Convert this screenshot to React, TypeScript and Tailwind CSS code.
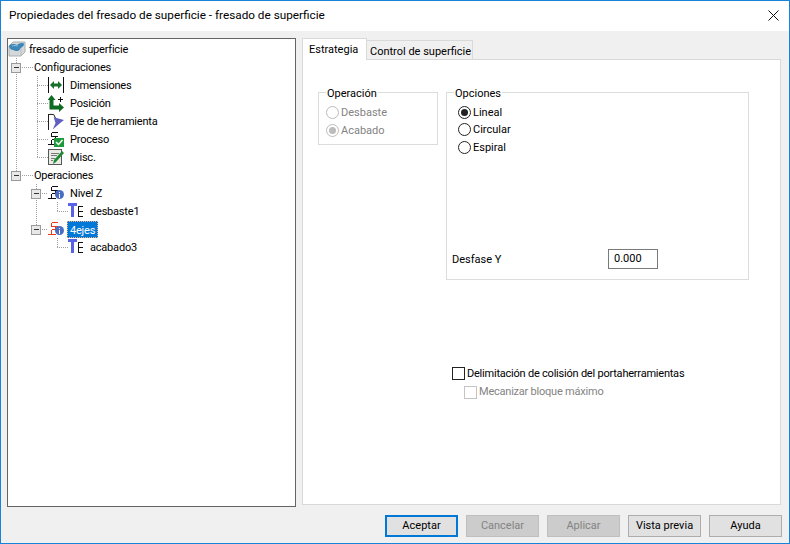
import type { ReactNode } from "react";

/* =========================
   ICONS
========================= */
function RootIcon() {
  return (
    <svg width="18" height="16" viewBox="0 0 18 16">
      <path d="M1 5 L5 1 H17 V11 L13 15 H1 Z" fill="#d5d8da" stroke="#a9aeb2" />
      <path d="M1 5 H13 V15 M13 5 L17 1" fill="none" stroke="#b9bdc0" />
      <path d="M1 5 C3 2 7 3 9 4 C11 2 15 1 16 3 C16 6 13 6 12 8 C11 11 7 10 5 9 C3 9 1 7 1 5 Z" fill="#3c86b8" />
      <path d="M4 5 C6 4 8 5 10 5" fill="none" stroke="#8fc1de" />
    </svg>
  );
}

function DimensionIcon() {
  return (
    <svg width="16" height="16" viewBox="0 0 16 16">
      <path d="M0.5 0 V16 M15.5 0 V16" stroke="#111" shapeRendering="crispEdges" />
      <path d="M2 8 L6 4 V6.5 H10 V4 L14 8 L10 12 V9.5 H6 V12 Z" fill="#16702b" />
    </svg>
  );
}

function PositionIcon() {
  return (
    <svg width="16" height="17" viewBox="0 0 16 17">
      <path d="M3.5 0 L7.5 5 H5.5 V10.5 H11 V8 L16 12.5 L11 17 V14.5 H1.5 V5 H-0.5 Z" fill="#0f6b22" />
      <path d="M9.5 4.5 H15 M12 2 V7" stroke="#111" shapeRendering="crispEdges" />
    </svg>
  );
}

function AxisIcon() {
  return (
    <svg width="17" height="17" viewBox="0 0 17 17">
      <path d="M0.5 0 V17" stroke="#111" shapeRendering="crispEdges" />
      <path d="M1 1 H6 L10 9" fill="none" stroke="#111" />
      <path d="M6 4 L17 7 L12 11 L5 17 L8 10 Z" fill="#5f5fc4" />
    </svg>
  );
}

function BracketGlyph({ color }: { color: string }) {
  return (
    <path
      d="M3.5 1.5 H10 M3.5 1.5 V5.5 H10 M7.5 5.5 V8.5 M3.5 8.5 H9 M3.5 8.5 V12.5 M0 13.5 H8"
      fill="none"
      stroke={color}
      shapeRendering="crispEdges"
    />
  );
}

function ProcessIcon() {
  return (
    <svg width="16" height="16" viewBox="0 0 16 16">
      <BracketGlyph color="#111" />
      <rect x="6" y="7" width="10" height="9" fill="#1f9a3a" />
      <path d="M8 11 L10.5 13.5 L14.5 9" fill="none" stroke="#fff" strokeWidth="1.5" />
    </svg>
  );
}

function MiscIcon() {
  return (
    <svg width="16" height="16" viewBox="0 0 16 16">
      <rect x="0.5" y="0.5" width="13" height="15" fill="#eceae4" stroke="#55585a" />
      <path d="M3 4 H11 M3 6.5 H9 M3 9 H7 M3 11.5 H5" stroke="#77797a" shapeRendering="crispEdges" />
      <path d="M5 15 L6 11 L14 2 L16 4 L8 13 Z" fill="#1e8a34" />
    </svg>
  );
}

function InfoOperationIcon({ color }: { color: string }) {
  return (
    <svg width="16" height="16" viewBox="0 0 16 16">
      <BracketGlyph color={color} />
      <circle cx="11.5" cy="9.5" r="4.5" fill="#4a6ec4" />
      <path d="M11.5 7 V8 M11.5 9 V12.5" stroke="#fff" shapeRendering="crispEdges" />
    </svg>
  );
}

function ToolIcon() {
  return (
    <svg width="16" height="16" viewBox="0 0 16 16" shapeRendering="crispEdges">
      <path d="M0 0 H9 V3 H6 V14 H3 V3 H0 Z" fill="#5a62e6" />
      <path d="M10 3.5 H15 M10 3.5 V8.5 H15 M10 8.5 V13.5 H15" fill="none" stroke="#111" />
    </svg>
  );
}

/* =========================
   TREE
========================= */
interface Row {
  label: string;
  gutter: number;
  icon?: ReactNode;
  box?: number;
  dash?: [number, number];
  lines?: [number, number, number][];
  selected?: boolean;
}

const rows: Row[] = [
  { label: "fresado de superficie", gutter: 0, icon: <RootIcon /> },
  { label: "Configuraciones", gutter: 25, box: 8, dash: [14, 25], lines: [[8, 0, 18]] },
  { label: "Dimensiones", gutter: 40, icon: <DimensionIcon />, dash: [29, 40], lines: [[8, 0, 18], [29, 0, 18]] },
  { label: "Posición", gutter: 40, icon: <PositionIcon />, dash: [29, 40], lines: [[8, 0, 18], [29, 0, 18]] },
  { label: "Eje de herramienta", gutter: 40, icon: <AxisIcon />, dash: [29, 40], lines: [[8, 0, 18], [29, 0, 18]] },
  { label: "Proceso", gutter: 40, icon: <ProcessIcon />, dash: [29, 40], lines: [[8, 0, 18], [29, 0, 18]] },
  { label: "Misc.", gutter: 40, icon: <MiscIcon />, dash: [29, 40], lines: [[8, 0, 18], [29, 0, 9]] },
  { label: "Operaciones", gutter: 25, box: 8, dash: [14, 25], lines: [[8, 0, 5], [29, 9, 18]] },
  { label: "Nivel Z", gutter: 40, icon: <InfoOperationIcon color="#111" />, box: 28, dash: [34, 40], lines: [[28, 0, 18]] },
  { label: "desbaste1", gutter: 60, icon: <ToolIcon />, dash: [49, 60], lines: [[28, 0, 18], [49, 0, 9]] },
  { label: "4ejes", gutter: 40, icon: <InfoOperationIcon color="#e8391a" />, box: 28, dash: [34, 40], lines: [[28, 0, 5]], selected: true },
  { label: "acabado3", gutter: 60, icon: <ToolIcon />, dash: [49, 60], lines: [[49, 0, 9]] },
];

function Gutter({ row }: { row: Row }) {
  if (!row.gutter) return null;
  return (
    <svg width={row.gutter} height="18" viewBox={`0 0 ${row.gutter} 18`} className="shrink-0" shapeRendering="crispEdges">
      {row.lines?.map(([x, y1, y2], i) => (
        <path key={i} d={`M${x + 0.5} ${y1} V${y2}`} stroke="#a0a0a0" strokeDasharray="1 1" />
      ))}
      {row.dash && <path d={`M${row.dash[0]} 9.5 H${row.dash[1]}`} stroke="#a0a0a0" strokeDasharray="1 1" />}
      {row.box !== undefined && (
        <g>
          <rect x={row.box - 4.5} y="5.5" width="9" height="9" fill="#e8e8e8" stroke="#9a9a9a" />
          <path d={`M${row.box - 2} 9.5 H${row.box + 3}`} stroke="#333" />
        </g>
      )}
    </svg>
  );
}

function Tree() {
  return (
    <div className="w-[289px] h-[469px] shrink-0 bg-white border border-[#646464] pt-px tracking-[-0.2px]">
      {rows.map((row) => (
        <div key={row.label} className="flex items-center h-[18px]">
          <Gutter row={row} />
          {row.icon && <span className="flex shrink-0 w-4 mr-[5px] first:w-[18px] first:mr-[2px]">{row.icon}</span>}
          <span
            className={
              row.selected
                ? "bg-[#0078d7] text-white outline-1 outline-dotted outline-[#f4b183] -outline-offset-1 px-[3px] h-[17px] leading-[19px] -ml-[2px]"
                : "px-[1px] h-[18px] leading-[20px] text-black"
            }
          >
            {row.label}
          </span>
        </div>
      ))}
    </div>
  );
}

/* =========================
   FORM CONTROLS
========================= */
function Radio({ label, checked, disabled }: { label: string; checked?: boolean; disabled?: boolean }) {
  return (
    <div className={`flex items-center h-[18px] whitespace-nowrap ${disabled ? "text-[#838383]" : "text-black"}`}>
      <span
        className={`flex items-center justify-center w-[13px] h-[13px] mr-[2px] rounded-full border bg-white ${
          disabled ? "border-[#bcbcbc]" : "border-[#222]"
        }`}
      >
        {checked && <span className={`w-[7px] h-[7px] rounded-full ${disabled ? "bg-[#bcbcbc]" : "bg-[#222]"}`} />}
      </span>
      <span className="pt-[2px]">{label}</span>
    </div>
  );
}

function Check({ label, disabled }: { label: string; disabled?: boolean }) {
  return (
    <div className={`flex items-center h-[19px] whitespace-nowrap tracking-[-0.22px] ${disabled ? "text-[#838383] ml-3" : "text-black"}`}>
      <span className={`w-[13px] h-[13px] mr-[2px] border bg-white ${disabled ? "border-[#c4c4c4]" : "border-[#222]"}`} />
      <span className={disabled ? "" : "pt-px"}>{label}</span>
    </div>
  );
}

function Btn({ label, state }: { label: string; state?: "default" | "disabled" }) {
  const look =
    state === "default"
      ? "bg-[#e1e1e1] border-2 border-[#0078d7] text-black"
      : state === "disabled"
        ? "bg-[#cccccc] border border-[#bfbfbf] text-[#838383]"
        : "bg-[#e1e1e1] border border-[#adadad] text-black";
  return <button className={`w-[73px] h-[22px] ${look}`}>{label}</button>;
}

/* =========================
   PAGE
========================= */
export default function App() {
  return (
    <div
      className="w-[790px] h-[544px] flex flex-col bg-[#f0f0f0] border border-[#1883d7] text-[11px] overflow-hidden"
      style={{ fontFamily: 'Roboto, "Noto Sans", sans-serif' }}
    >
      {/* TITLE */}
      <div className="h-[30px] shrink-0 bg-white flex items-center justify-between pl-2 pr-[10px] pb-[1px] text-black text-[11.75px]">
        <span>Propiedades del fresado de superficie - fresado de superficie</span>
        <svg width="11" height="11" viewBox="0 0 11 11">
          <path d="M0.5 0.5 L10.5 10.5 M10.5 0.5 L0.5 10.5" stroke="#111" />
        </svg>
      </div>

      {/* BODY */}
      <div className="flex gap-[6px] pl-[6px] pt-[7px]">
        <Tree />

        <div className="w-[479px] flex flex-col">
          <div className="flex items-end h-[21px]">
            <div className="w-[65px] h-[22px] -mb-px z-10 bg-white border border-b-0 border-[#d9d9d9] pl-[6px] leading-[21px] text-black whitespace-nowrap">
              Estrategia
            </div>
            <div className="w-[107px] h-[19px] -ml-px bg-[#f0f0f0] border border-b-0 border-[#d9d9d9] pl-[3px] leading-[21px] text-black whitespace-nowrap">
              Control de superficie
            </div>
          </div>

          <div className="h-[446px] bg-white border border-[#d9d9d9] pl-[15px] pt-[22px]">
            <div className="flex gap-2 items-start">
              <fieldset className="w-[120px] h-[63px] border border-[#dcdcdc] pl-[7px]">
                <legend className="px-[1px] pt-[4px] leading-[16px] text-black">Operación</legend>
                <div className="pt-[1px]">
                  <Radio label="Desbaste" disabled />
                  <Radio label="Acabado" checked disabled />
                </div>
              </fieldset>

              <fieldset className="w-[303px] h-[198px] border border-[#dcdcdc] pl-[7px]">
                <legend className="px-[1px] pt-[4px] leading-[16px] text-black">Opciones</legend>
                <div className="pl-[4px] pt-[1px] flex flex-col">
                  <Radio label="Lineal" checked />
                  <div className="-mt-px">
                    <Radio label="Circular" />
                  </div>
                  <Radio label="Espiral" />
                </div>
                <div className="flex items-center justify-between mt-[93px] pr-[90px] -ml-[2px] text-black">
                  <span className="pt-[2px]">Desfase Y</span>
                  <span className="w-[50px] h-[20px] bg-white border border-[#7a7a7a] pl-[5px] leading-[18px]">0.000</span>
                </div>
              </fieldset>
            </div>

            <div className="ml-[134px] mt-[84px]">
              <Check label="Delimitación de colisión del portaherramientas" />
              <Check label="Mecanizar bloque máximo" disabled />
            </div>
          </div>
        </div>
      </div>

      {/* BUTTONS */}
      <div className="flex justify-end gap-2 pr-[7px] pt-[8px]">
        <Btn label="Aceptar" state="default" />
        <Btn label="Cancelar" state="disabled" />
        <Btn label="Aplicar" state="disabled" />
        <Btn label="Vista previa" />
        <Btn label="Ayuda" />
      </div>
    </div>
  );
}
